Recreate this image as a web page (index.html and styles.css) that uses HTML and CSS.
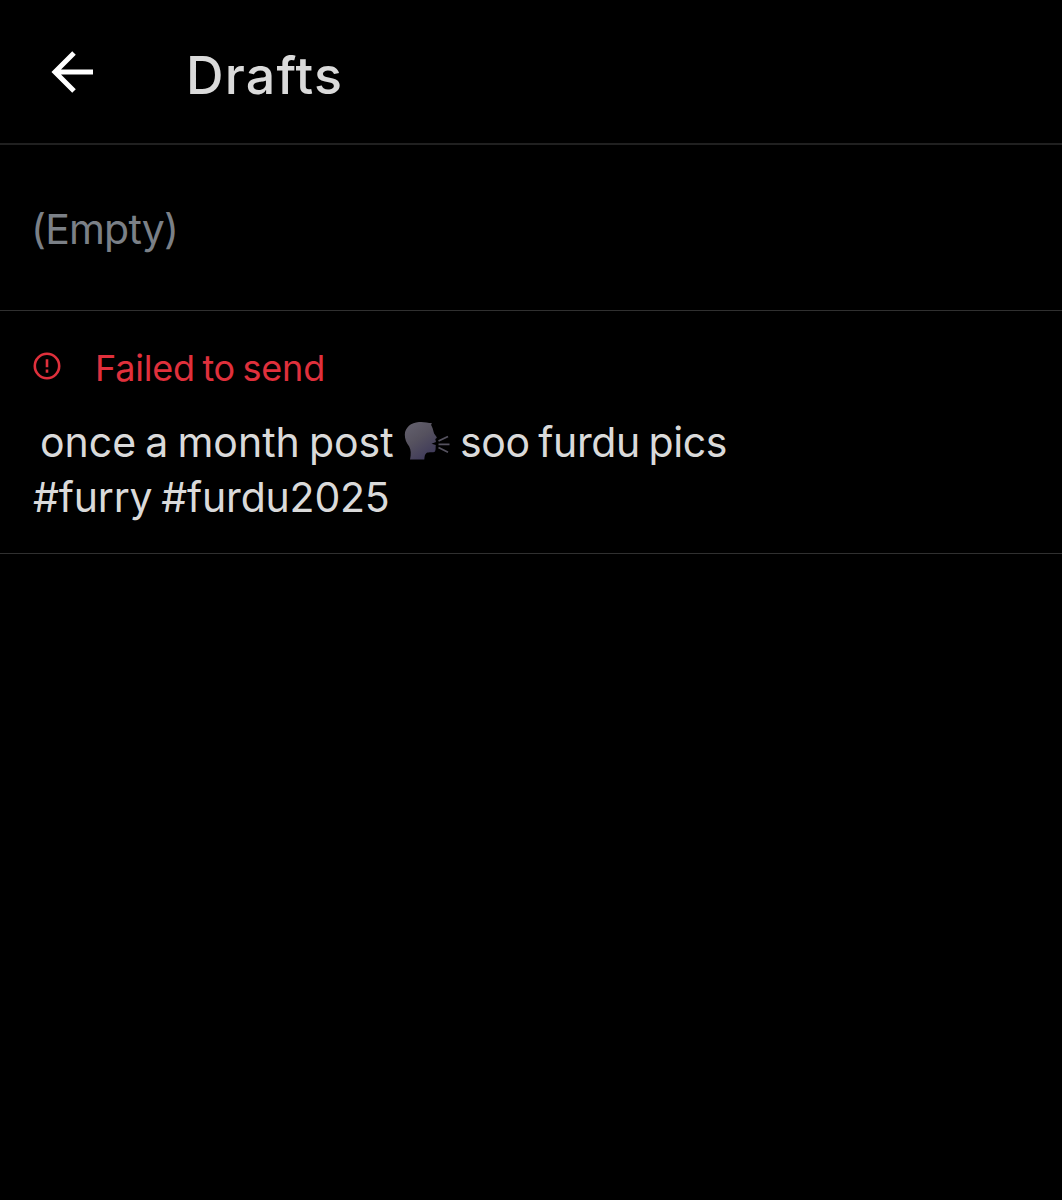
FILE: index.html
```html
<!DOCTYPE html>
<html lang="en">
<head>
  <meta charset="UTF-8">
  <meta name="viewport" content="width=device-width, initial-scale=1.0">
  <title>Drafts</title>
  <link rel="stylesheet" href="styles.css">
</head>
<body>
  <header class="top-bar">
    <svg class="back" viewBox="0 0 44 44" aria-label="Back">
      <path d="M43 22H5M24 3L5 22l19 19" />
    </svg>
    <h1>Drafts</h1>
  </header>

  <main>
    <div class="draft draft-empty">
      <p class="empty">(Empty)</p>
    </div>

    <div class="draft draft-failed">
      <div class="status">
        <svg class="alert" viewBox="0 0 28 28">
          <circle cx="14" cy="14" r="12.200" />
          <path d="M14 7.200v8M14 17.500v3.200" />
        </svg>
        <span>Failed to send</span>
      </div>
      <p class="text"><span class="line-one">once a month post</span>
        <svg class="speaking" viewBox="0 0 46 40" role="img" aria-label="speaking head">
          <defs>
            <linearGradient id="head" x1="0" y1="0" x2="0.600" y2="1">
              <stop offset="0" stop-color="#65626f" />
              <stop offset="0.500" stop-color="#56525f" />
              <stop offset="1" stop-color="#403b5a" />
            </linearGradient>
          </defs>
          <path class="face" d="M15 1C20 .500 23.500 2 28 2c-.900 1-1 1.800-.400 3 1.500 3 1.700 5 2.500 7.500l2.700 3.700c.300.900-1.500 1.500-1.500 2l.700 2.800-4.500 1.700 4.300 1.300c-.400 2 .300 4-.800 6.600-1.800 1.500-6 .300-8.500 1.300-1.800 1.300-2 4-2.200 6.600H6c1.200-5.500 1-9.500-.800-13C2.500 22 .700 18 .800 13.500 1 6.500 7 1.600 15 1z" />
          <path class="sound" d="M34.500 20l9.500-4.500M34.500 23.300h11M34.500 26.500l9.500 4.700" />
        </svg>
        <span class="line-rest">soo furdu pics</span><br><span class="tags">#furry #furdu2025</span></p>
    </div>
  </main>
</body>
</html>
```

FILE: styles.css
```css
body {
  margin: 0;
  min-height: 100vh;
  background: #000;
  color: #dadada;
  font-family: Inter, Roboto, sans-serif;
  font-size: 41px;
}
h1, p {
  margin: 0;
  font-weight: 400;
}
.top-bar {
  display: flex;
  align-items: center;
  height: 143px;
  padding-left: 50px;
  border-bottom: 2px solid #202020;
}
.back {
  width: 44px;
  height: 44px;
  margin-top: 1px;
  fill: none;
  stroke: #fff;
  stroke-width: 5;
}
h1 {
  margin: 7px 0 0 92px;
  font-size: 52px;
  font-weight: 500;
  letter-spacing: 1.2px;
}
.draft {
  box-sizing: border-box;
  padding: 0 33px;
  border-bottom: 1px solid #303030;
}
.draft-empty {
  display: flex;
  align-items: center;
  height: 166px;
}
.empty {
  margin: 3px 0 0 -2px;
  color: #7b8087;
  letter-spacing: -0.8px;
}
.draft-failed {
  height: 243px;
  padding-top: 29px;
}
.status {
  display: flex;
  align-items: center;
  height: 56px;
  color: #e0303c;
  font-size: 36px;
  letter-spacing: -0.2px;
  word-spacing: -2.4px;
}
.alert {
  width: 28px;
  height: 28px;
  margin: -5px 34px 0 0;
  fill: none;
  stroke: #e0303c;
  stroke-width: 2.6;
}
.text {
  margin-top: 19px;
  line-height: 55px;
  word-spacing: -2.4px;
}
.line-one {
  margin-left: 7px;
}
.speaking {
  width: 46px;
  height: 40px;
  margin: 0 1px;
  vertical-align: -4px;
}
.face {
  fill: url(#head);
}
.sound {
  fill: none;
  stroke: #55525f;
  stroke-width: 1.8;
}
.line-rest {
  letter-spacing: -0.4px;
}
.tags {
  letter-spacing: -0.2px;
}
```
